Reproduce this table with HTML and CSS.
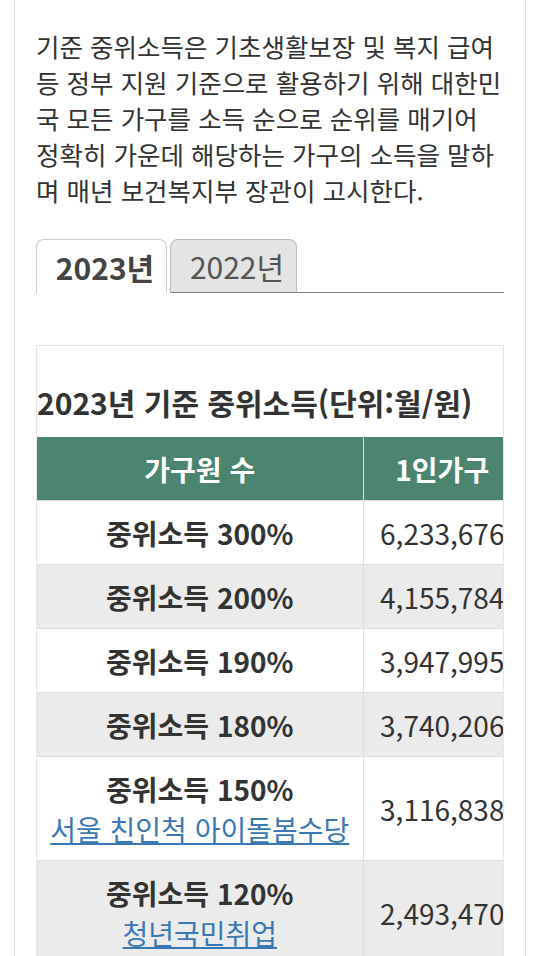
FILE: index.html
```html
<!DOCTYPE html>
<html lang="ko">
<head>
<meta charset="utf-8">
<title>기준 중위소득</title>
<link rel="stylesheet" href="styles.css">
</head>
<body>
<div class="card">
  <p class="intro">기준 중위소득은 기초생활보장 및 복지 급여 등 정부 지원 기준으로 활용하기 위해 대한민국 모든 가구를 소득 순으로 순위를 매기어 정확히 가운데 해당하는 가구의 소득을 말하며 매년 보건복지부 장관이 고시한다.</p>

  <div class="tabs">
    <div class="tab tab-active">2023년</div>
    <div class="tab tab-inactive">2022년</div>
    <div class="tab-fill"></div>
  </div>

  <div class="table-box">
    <h3 class="table-title">2023년 기준 중위소득(단위:월/원)</h3>
    <table class="income">
      <colgroup>
        <col class="col-first">
        <col class="col-num">
      </colgroup>
      <thead>
        <tr><th class="th-label">가구원 수</th><th>1인가구</th></tr>
      </thead>
      <tbody>
        <tr><td class="label">중위소득 300%</td><td>6,233,676</td></tr>
        <tr class="alt"><td class="label">중위소득 200%</td><td>4,155,784</td></tr>
        <tr><td class="label">중위소득 190%</td><td>3,947,995</td></tr>
        <tr class="alt"><td class="label">중위소득 180%</td><td>3,740,206</td></tr>
        <tr><td class="label">중위소득 150%<br><a href="#" class="link">서울 친인척 아이돌봄수당</a></td><td>3,116,838</td></tr>
        <tr class="alt"><td class="label">중위소득 120%<br><a href="#" class="link">청년국민취업</a></td><td>2,493,470</td></tr>
      </tbody>
    </table>
  </div>
</div>
</body>
</html>
```

FILE: styles.css
```css
html, body {
  margin: 0;
  padding: 0;
  background: #ffffff;
}

body {
  font-family: "Noto Sans CJK KR", "Noto Sans", sans-serif;
  color: #333333;
}

.card {
  margin: 0 14px;
  border-left: 1px solid #dddddd;
  border-right: 1px solid #dddddd;
  padding: 28px 21px 40px;
  min-height: 956px;
  box-sizing: border-box;
}

.intro {
  margin: 0;
  font-size: 25.5px;
  line-height: 36px;
  color: #333333;
}

.tabs {
  display: flex;
  align-items: flex-end;
  margin-top: 31px;
  height: 54px;
}

.tab {
  height: 54px;
  box-sizing: border-box;
  display: flex;
  align-items: center;
  justify-content: center;
  padding-left: 7px;
  font-size: 30px;
  line-height: 40px;
  border-radius: 8px 8px 0 0;
}

.tab-active {
  width: 131px;
  border: 1px solid #cccccc;
  border-bottom: none;
  background: #ffffff;
  font-weight: 700;
  color: #444444;
}

.tab-inactive {
  width: 127px;
  margin-left: 3px;
  background: #e4e4e4;
  border: 1px solid #bbbbbb;
  border-bottom: 1px solid #808080;
  color: #555555;
}

.tab-fill {
  flex: 1;
  border-bottom: 1px solid #808080;
}

.table-box {
  margin-top: 52px;
  border: 1px solid #e6e6e6;
  overflow-x: auto;
  scrollbar-width: none;
}

.table-title {
  margin: 36px 0 15px;
  font-size: 30px;
  line-height: 40px;
  font-weight: 700;
  color: #333333;
  white-space: nowrap;
}

.income {
  border-collapse: collapse;
  table-layout: fixed;
  width: 484px;
  font-size: 28px;
  line-height: 40px;
}

.col-first {
  width: 326px;
}

.col-num {
  width: 158px;
}

.income th {
  background: #4b8570;
  color: #ffffff;
  font-weight: 700;
  height: 63px;
  padding: 0;
  border-left: 1px solid #dddddd;
  text-align: center;
  white-space: nowrap;
}

.income th.th-label {
  border-left: none;
}

.income td {
  padding: 12px 0 11px;
  text-align: center;
  border-left: 1px solid #dddddd;
  border-top: 1px solid #dddddd;
  color: #333333;
  white-space: nowrap;
  background: #ffffff;
}

.income td.label {
  border-left: none;
  font-weight: 700;
}

.income tr.alt td {
  background: #ebebeb;
}

.link {
  font-weight: 400;
  color: #3a78b5;
  text-decoration: underline;
}
```
